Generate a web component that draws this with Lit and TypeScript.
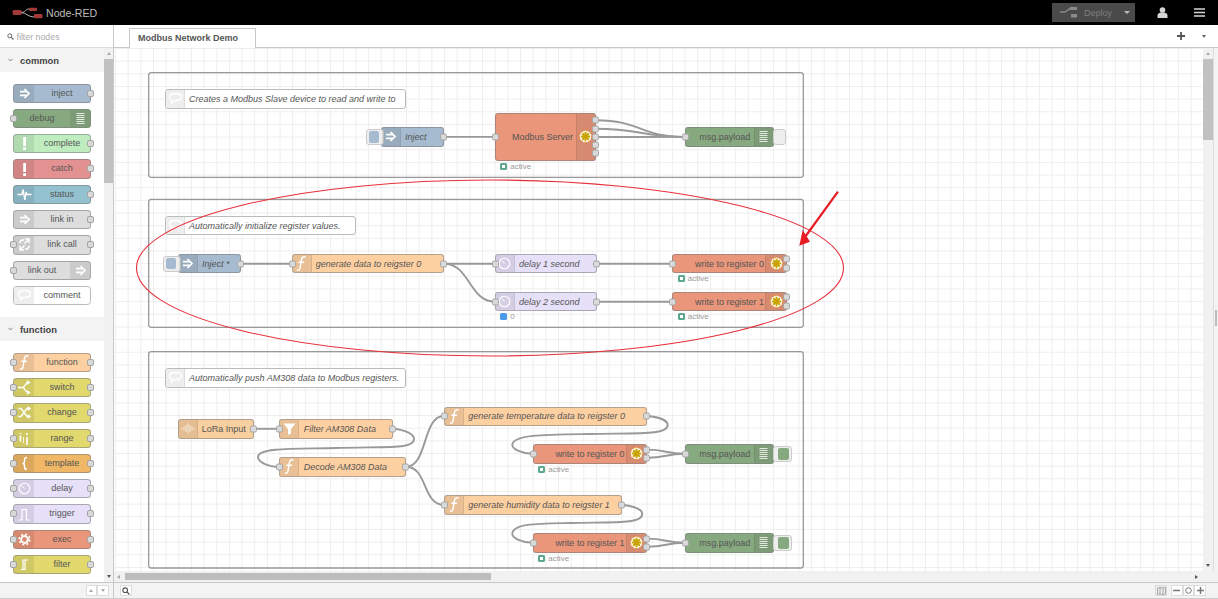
import { LitElement, html, css, svg } from 'lit';
import { customElement } from 'lit/decorators.js';

const ORIGIN_X = 114;
const ORIGIN_Y = 48;

const COLORS: Record<string, string> = {
  inject: '#a6bbcf', debug: '#87a980', complete: '#c0edc0', catch: '#e49191', status: '#94c1d0',
  link: '#dddddd', comment: '#ffffff', fn: '#fdd0a2', switch: '#e2d96e', template: '#efb766',
  delay: '#e6e0f8', exec: '#e9967a', lora: '#f8cf9f',
};

function icon(name: string) {
  switch (name) {
    case 'inject':
    case 'link':
      return svg`<path d="M9.5 5 14 9.5 9.5 14M5 7.6h7.5M5 11.4h7.5" fill="none" stroke="#fff" stroke-width="1.7"/>`;
    case 'linkcall':
      return svg`<path d="M10 4h4v4M14 4 9.5 8.5M9 15H5v-4M5 15l4.5-4.5M4.5 8l2-3H9M14.5 11l-2 3H10" fill="none" stroke="#fff" stroke-width="1.5"/>`;
    case 'debug':
      return svg`<path d="M5.5 4.5h8M5.5 6.5h8M5.5 8.5h8M5.5 10.5h8M5.5 12.5h8M5.5 14.5h8" stroke="#fff" stroke-width=".8"/>`;
    case 'alert':
      return svg`<rect x="8.2" y="3" width="2.8" height="9" fill="#fff"/><rect x="8.2" y="13.2" width="2.8" height="2.8" fill="#fff"/>`;
    case 'status':
      return svg`<path d="M2.5 9.5H7l1.2-5 1.6 10.500 1.400-8 .8 2.500h4.500" fill="none" stroke="#fff" stroke-width="1.400"/>`;
    case 'comment':
      return svg`<path d="M3.5 8C3.500 5.500 6 4.500 9.500 4.500S15.500 5.500 15.500 8 13 11.500 9.500 11.500H8L5.500 14V11C4.300 10.500 3.500 9.500 3.500 8Z" fill="none" stroke="#fff" stroke-width="1.400"/>`;
    case 'fn':
      return svg`<path d="M13.500 3c-2.300-.8-3.700.3-4 2.500L8 14c-.3 2-1.600 2.600-3.200 1.900M6.300 8.300H12" fill="none" stroke="#fff" stroke-width="1.500"/>`;
    case 'switch':
      return svg`<path d="M3 9.500h4.500M13 4.500c-3 0-2.500 5-5.500 5 3 0 2.500 5 5.500 5M12 2.800l2.500 1.700-2.500 1.700M12 12.800l2.500 1.700-2.500 1.700" fill="none" stroke="#fff" stroke-width="1.400"/>`;
    case 'change':
      return svg`<path d="M3.500 5.500H6l6 8h2M3.500 13.500H6l6-8h2M12.800 3.700l2.200 1.800-2.200 1.800M12.800 11.700l2.200 1.800-2.200 1.800" fill="none" stroke="#fff" stroke-width="1.400"/>`;
    case 'range':
      return svg`<path d="M5.500 6.500v6M12 8v8M12 4v2M5.500 4v1" stroke="#fff" stroke-width="1.600" fill="none"/><path d="M8.500 8v6" stroke="#fff" stroke-width=".8"/>`;
    case 'template':
      return svg`<path d="M12 3.500c-2 0-2.500 1-2.500 2.500v1.500c0 1.200-.6 2-2 2 1.400 0 2 .8 2 2V13c0 1.500.5 2.500 2.500 2.500" fill="none" stroke="#fff" stroke-width="1.400"/>`;
    case 'delay':
      return svg`<circle cx="9.500" cy="9.500" r="5.300" fill="none" stroke="#fff" stroke-width="1.100"/><path d="M6.800 6.800 9.500 9.500" stroke="#fff" stroke-width="1"/>`;
    case 'trigger':
      return svg`<path d="M3.500 15H7V4.500h4.500V15H15" fill="none" stroke="#fff" stroke-width="1.200"/>`;
    case 'exec':
      return svg`<circle cx="9.500" cy="9.500" r="3.400" fill="none" stroke="#fff" stroke-width="2"/><circle cx="9.500" cy="9.500" r="5.300" fill="none" stroke="#fff" stroke-width="1.600" stroke-dasharray="2 2.160"/>`;
    case 'filter':
      return svg`<path d="M6 14.500h2V5h5M10 5v9.500H8" fill="none" stroke="#fff" stroke-width="1.200"/>`;
    case 'funnel':
      return svg`<path d="M3.500 4.500h12L11 10v4.500l-3 1.300V10Z" fill="#fff"/>`;
    case 'lora':
      return svg`<path d="M4 8.500v2M6 7.500v4M8 6v7M10 4.500v10M12 6v7M14 7.500v4M16 8.500v2" stroke="#fff" stroke-width=".9" opacity=".75"/>`;
    case 'modbus':
      return svg`<circle cx="9.500" cy="9.500" r="6" fill="#fff" stroke="#e8932a" stroke-width="1" stroke-dasharray="2.500 1.500"/><path d="M9.500 4.800v9.400M4.800 9.500h9.400M6.200 6.200l6.600 6.600M12.800 6.200l-6.600 6.600" stroke="#c9a400" stroke-width="2"/>`;
    default:
      return svg``;
  }
}

interface PaletteNode { label: string; color: string; icon: string; inp?: boolean; out?: boolean; right?: boolean; }

const COMMON: PaletteNode[] = [
  { label: 'inject', color: COLORS.inject, icon: 'inject', out: true },
  { label: 'debug', color: COLORS.debug, icon: 'debug', inp: true, right: true },
  { label: 'complete', color: COLORS.complete, icon: 'alert', out: true },
  { label: 'catch', color: COLORS.catch, icon: 'alert', out: true },
  { label: 'status', color: COLORS.status, icon: 'status', out: true },
  { label: 'link in', color: COLORS.link, icon: 'link', out: true },
  { label: 'link call', color: COLORS.link, icon: 'linkcall', inp: true, out: true },
  { label: 'link out', color: COLORS.link, icon: 'link', inp: true, right: true },
  { label: 'comment', color: COLORS.comment, icon: 'comment' },
];

const FUNCTION: PaletteNode[] = [
  { label: 'function', color: COLORS.fn, icon: 'fn', inp: true, out: true },
  { label: 'switch', color: COLORS.switch, icon: 'switch', inp: true, out: true },
  { label: 'change', color: COLORS.switch, icon: 'change', inp: true, out: true },
  { label: 'range', color: COLORS.switch, icon: 'range', inp: true, out: true },
  { label: 'template', color: COLORS.template, icon: 'template', inp: true, out: true },
  { label: 'delay', color: COLORS.delay, icon: 'delay', inp: true, out: true },
  { label: 'trigger', color: COLORS.delay, icon: 'trigger', inp: true, out: true },
  { label: 'exec', color: COLORS.exec, icon: 'exec', inp: true, out: true },
  { label: 'filter', color: COLORS.switch, icon: 'filter', inp: true, out: true },
];

interface FlowNode {
  x: number; y: number; w: number; h?: number; label: string; color: string; icon: string;
  tx: number; italic?: boolean; inp?: boolean; outs?: number[]; right?: number;
  btn?: { x: number; w: number; ix: number; iw: number; fill: string };
  status?: { text: string; kind: string };
}

const GROUPS = [
  { x: 148.7, y: 72.7, w: 654.6, h: 104.6 },
  { x: 148.7, y: 199.3, w: 654.6, h: 128 },
  { x: 148.7, y: 351.7, w: 654.6, h: 216.3 },
];

const COMMENTS = [
  { x: 165, y: 89.3, w: 241, label: 'Creates a Modbus Slave device to read and write to' },
  { x: 165, y: 216, w: 190.5, label: 'Automatically initialize register values.' },
  { x: 165, y: 368.3, w: 241, label: 'Automatically push AM308 data to Modbus registers.' },
];

const writeNode = (x: number, y: number, w: number, label: string): FlowNode => ({
  x, y, w, label, color: COLORS.exec, icon: 'modbus', tx: x + 22.7, right: 19.3, inp: true,
  outs: [y + 5.3, y + 13.5], status: { text: 'active', kind: 'ok' },
});

const payload = (y: number, on: boolean): FlowNode => ({
  x: 685, y, w: 89, label: 'msg.payload', color: COLORS.debug, icon: 'debug', tx: 699.3, right: 18.3, inp: true,
  btn: on
    ? { x: 772, w: 18.7, ix: 776.7, iw: 11.3, fill: COLORS.debug }
    : { x: 772, w: 13.3, ix: 775.5, iw: 7.5, fill: '#eeeeee' },
});

const NODES: FlowNode[] = [
  { x: 380.7, y: 127.3, w: 63.6, label: 'Inject', color: COLORS.inject, icon: 'inject', tx: 405, italic: true, outs: [136.9],
    btn: { x: 364.7, w: 18, ix: 367.7, iw: 10.8, fill: COLORS.inject } },
  { x: 494.7, y: 113.3, w: 101.3, h: 47.4, label: 'Modbus Server', color: COLORS.exec, icon: 'modbus', tx: 512, right: 18.3, inp: true,
    outs: [120.3, 128.7, 137, 145.3, 153.3], status: { text: 'active', kind: 'ok' } },
  payload(127.3, false),

  { x: 177.7, y: 254, w: 63.3, label: 'Inject *', color: COLORS.inject, icon: 'inject', tx: 202, italic: true, outs: [263.7],
    btn: { x: 161.7, w: 18, ix: 165, iw: 10.5, fill: COLORS.inject } },
  { x: 291.7, y: 254, w: 152.6, label: 'generate data to reigster 0', color: COLORS.fn, icon: 'fn', tx: 315.7, italic: true, inp: true, outs: [263.7] },
  { x: 494.7, y: 254, w: 102, label: 'delay 1 second', color: COLORS.delay, icon: 'delay', tx: 519, italic: true, inp: true, outs: [263.7] },
  { x: 494.7, y: 292, w: 102, label: 'delay 2 second', color: COLORS.delay, icon: 'delay', tx: 519, italic: true, inp: true, outs: [301.7], status: { text: '0', kind: 'blue' } },
  writeNode(672.3, 254, 114.4, 'write to register 0'),
  writeNode(672.3, 292, 114.4, 'write to register 1'),

  { x: 177.7, y: 419.3, w: 76.3, label: 'LoRa Input', color: COLORS.lora, icon: 'lora', tx: 201.7, outs: [428.8] },
  { x: 279.3, y: 419.3, w: 114, label: 'Filter AM308 Data', color: COLORS.fn, icon: 'funnel', tx: 303.7, italic: true, inp: true, outs: [428.8] },
  { x: 279.3, y: 457.3, w: 126.7, label: 'Decode AM308 Data', color: COLORS.fn, icon: 'fn', tx: 303.7, italic: true, inp: true, outs: [466.8] },
  { x: 444, y: 406.5, w: 203.3, label: 'generate temperature data to reigster 0', color: COLORS.fn, icon: 'fn', tx: 468.3, italic: true, inp: true, outs: [416] },
  { x: 444, y: 495.3, w: 178, label: 'generate humidity data to reigster 1', color: COLORS.fn, icon: 'fn', tx: 468.3, italic: true, inp: true, outs: [504.8] },
  writeNode(532.7, 444.3, 114.6, 'write to register 0'),
  payload(444.3, true),
  writeNode(532.7, 533.3, 114.6, 'write to register 1'),
  payload(533.3, true),
];

function curve(x1: number, y1: number, x2: number, y2: number) {
  const c = (x2 - x1) * 0.5;
  return `M${x1} ${y1}C${x1 + c} ${y1} ${x2 - c} ${y2} ${x2} ${y2}`;
}

const WIRES = [
  curve(444.3, 136.9, 494.7, 136.9),
  curve(596, 120.3, 685, 136.9),
  curve(596, 128.7, 685, 136.9),
  curve(596, 137, 685, 136.9),
  curve(241, 263.7, 291.7, 263.7),
  curve(444.3, 263.7, 494.7, 263.7),
  curve(444.3, 263.7, 494.7, 301.7),
  curve(596.7, 263.7, 672.3, 263.7),
  curve(596.7, 301.7, 672.3, 301.7),
  curve(254, 428.8, 279.3, 428.8),
  'M393.3 428.8C405 430 414 434 414 439C414 449 392 446.5 336 448C300 449 258 447 258 457C258 462 268 466.8 279.3 466.8',
  'M406 466.8C428 466.8 422 416 444 416',
  'M406 466.8C428 466.8 422 504.8 444 504.8',
  'M647.3 416C658 417 667.7 420 667.7 425C667.7 435 640 433 590 434C550 434.5 512.3 434 512.3 445C512.3 449 522 453.8 532.7 453.8',
  'M622 504.8C632 506 642.3 509 642.3 514C642.3 524 615 522 570 523C540 523.5 512.3 523 512.3 534C512.3 538 522 542.8 532.7 542.8',
  curve(647.3, 449.6, 685, 453.8),
  curve(647.3, 457.8, 685, 453.8),
  curve(647.3, 538.6, 685, 542.8),
  curve(647.3, 546.8, 685, 542.8),
];

@customElement('app-root')
export class AppRoot extends LitElement {
  static styles = css`
    :host {
      display: flex;
      flex-direction: column;
      height: 100vh;
      overflow: hidden;
      font-family: "Liberation Sans", Arial, sans-serif;
      color: #555;
      background: #fff;
    }

    .header {
      flex: 0 0 25px;
      display: flex;
      align-items: center;
      background: #000;
      padding: 0 13px 0 12px;
    }
    .logo { width: 31px; height: 12px; margin-right: 3px; }
    .brand { color: #bdbdbd; font-size: 10.6px; }
    .deploy {
      margin-left: auto;
      width: 83px;
      height: 19px;
      background: #4a4a4a;
      display: flex;
      align-items: center;
      color: #7d7d7d;
      font-size: 9px;
      padding-left: 8px;
      box-sizing: border-box;
    }
    .deploy svg { margin-right: 7px; }
    .deploy .caret { margin-left: 12px; }
    .user { margin-left: 22px; margin-right: 26px; }

    .main { flex: 1; display: flex; min-height: 0; }

    .sidebar {
      flex: 0 0 113px;
      display: flex;
      flex-direction: column;
      border-right: 1px solid #c8c8c8;
    }
    .filter {
      flex: 0 0 23px;
      display: flex;
      align-items: center;
      gap: 2.5px;
      padding: 1px 0 0 7px;
      font-size: 8.8px;
      color: #aaa;
      border-bottom: 1px solid #ddd;
      box-sizing: border-box;
    }
    .palette-wrap { flex: 1; display: flex; min-height: 0; }
    .palette { flex: 1; overflow: hidden; }
    .cat {
      height: 24px;
      display: flex;
      align-items: center;
      background: #f3f3f3;
      font-size: 9.4px;
      font-weight: bold;
      color: #444;
      padding-left: 8px;
      gap: 7px;
    }
    .items {
      display: flex;
      flex-direction: column;
      gap: 6px;
      padding: 11.5px 0 12px 13px;
    }

    .pnode {
      position: relative;
      height: 19.3px;
      width: 78px;
      box-sizing: border-box;
      border: 1px solid rgba(120, 120, 120, .55);
      border-radius: 3.5px;
      display: flex;
      font-size: 9px;
    }
    .pnode.white { border-color: #bbb; }
    .pnode .lbl { flex: 1; text-align: center; line-height: 17px; white-space: nowrap; }
    .pnode .ic { flex: 0 0 20px; }
    .ic {
      background: rgba(0, 0, 0, .08);
      display: flex;
      align-items: center;
      justify-content: center;
      overflow: hidden;
      min-height: 0;
    }
    .ic svg { flex: none; width: 19px; height: 19px; margin: -2px 0; }
    .white .ic { background: #eee; }
    .pnode .ic.l { border-radius: 2.5px 0 0 2.5px; }
    .ic.r { border-radius: 0 2.5px 2.5px 0; }
    .port {
      position: absolute;
      width: 7px;
      height: 7px;
      box-sizing: border-box;
      background: #d9d9d9;
      border: 1px solid #a5a5a5;
      border-radius: 2px;
    }
    .pnode .port { top: 5px; }
    .pnode .port.in { left: -4px; }
    .pnode .port.out { right: -4px; }

    .vbar {
      flex: 0 0 9px;
      background: #f1f1f1;
      display: flex;
      flex-direction: column;
    }
    .vbar .arrow { flex: 0 0 11px; display: flex; align-items: center; justify-content: center; }
    .vbar .thumb { background: #c1c1c1; }
    .vbar .fill { flex: 1; }
    .up { width: 0; height: 0; border: 2.5px solid transparent; border-top: 0; border-bottom: 3px solid #555; }
    .up.dim { border-bottom-color: #aaa; }
    .down { width: 0; height: 0; border: 2.5px solid transparent; border-bottom: 0; border-top: 3px solid #555; }

    .workspace { flex: 1; display: flex; flex-direction: column; min-width: 0; }
    .tabs {
      flex: 0 0 23px;
      display: flex;
      align-items: flex-end;
      box-sizing: border-box;
      border-bottom: 1px solid #c8c8c8;
      padding-left: 15px;
    }
    .tab {
      width: 127px;
      height: 20px;
      box-sizing: border-box;
      border: 1px solid #c8c8c8;
      border-bottom: 0;
      margin-bottom: -1px;
      background: #fff;
      font-size: 9px;
      font-weight: bold;
      color: #555;
      padding-left: 8px;
      line-height: 18px;
    }
    .tab-tools { margin-left: auto; margin-right: 12px; align-self: center; display: flex; align-items: center; gap: 17px; }

    .view { flex: 1; display: flex; min-height: 0; }
    .canvas {
      flex: 1;
      position: relative;
      overflow: hidden;
      background-color: #fff;
      background-image:
        linear-gradient(to right, #eee 1px, transparent 1px),
        linear-gradient(to bottom, #eee 1px, transparent 1px);
      background-size: 12.67px 12.67px;
      background-position: 1px 0;
    }
    .wires, .marks { position: absolute; left: 0; top: 0; width: 1089px; height: 523px; }
    .marks { z-index: 5; pointer-events: none; }
    .wbar { flex: 0 0 10px; }
    .wbar .thumb { flex: 0 0 81px; }
    .sep { flex: 0 0 5px; background: #f3f3f3; display: flex; align-items: center; justify-content: center; border-left: 1px solid #ddd; box-sizing: border-box; }
    .sep i { display: block; width: 2px; height: 16px; background: #bbb; margin-top: 16px; }

    .hbar {
      flex: 0 0 11px;
      background: #f1f1f1;
      display: flex;
      align-items: center;
      padding: 0 20px 0 3px;
      gap: 3px;
    }
    .hbar .thumb { width: 366px; height: 7px; background: #bdbdbd; margin-left: 2px; }
    .hbar .end { margin-left: auto; }
    .left { width: 0; height: 0; border: 2.5px solid transparent; border-left: 0; border-right: 3px solid #aaa; }
    .right { width: 0; height: 0; border: 2.5px solid transparent; border-right: 0; border-left: 3px solid #555; }

    .cnode {
      position: absolute;
      box-sizing: border-box;
      border: 1px solid rgba(120, 120, 120, .55);
      border-radius: 3px;
      display: flex;
      font-size: 9px;
      z-index: 2;
    }
    .cnode.white { background: #fff; border-color: #bbb; }
    .cnode .ic { flex: 0 0 18px; border-right: 1px solid rgba(0, 0, 0, .07); }
    .cnode .ic.r { margin-left: auto; border-right: 0; border-left: 1px solid rgba(0, 0, 0, .07); }
    .cnode .ic.l { border-radius: 2px 0 0 2px; }
    .cnode .lbl {
      position: absolute;
      top: 0;
      bottom: 0;
      display: flex;
      align-items: center;
      white-space: nowrap;
      color: #555;
    }
    .cnode .lbl.it { font-style: italic; }
    .cnode .port { transform: translateY(-50%); }
    .cnode .port.in { left: -4px; }
    .cnode .port.out { right: -4px; }
    .btn {
      position: absolute;
      top: 0.5px;
      bottom: 0.5px;
      box-sizing: border-box;
      background: #eee;
      border: 1px solid #ccc;
      border-radius: 3px;
      z-index: -1;
    }
    .btn i {
      position: absolute;
      top: 1.5px;
      bottom: 1.5px;
      border-radius: 2px;
      display: block;
    }
    .status {
      position: absolute;
      left: 4.5px;
      top: 100%;
      margin-top: 3px;
      display: flex;
      align-items: center;
      gap: 3px;
      font-size: 8px;
      color: #999;
      line-height: 7px;
    }
    .dot { width: 7px; height: 7px; box-sizing: border-box; border-radius: 1.5px; }
    .dot.ok { border: 2px solid #5ba88c; background: #fff; }
    .dot.blue { background: #4a9ae8; }

    .footer {
      flex: 0 0 17px;
      display: flex;
      align-items: center;
      box-sizing: border-box;
      background: #f3f3f3;
      border-top: 1px solid #c8c8c8;
      border-bottom: 1px solid #ccc;
    }
    .foot-left {
      flex: 0 0 114px;
      height: 100%;
      display: flex;
      align-items: center;
      justify-content: flex-end;
      padding-right: 4px;
      box-sizing: border-box;
      border-right: 1px solid #c8c8c8;
    }
    .fbtn {
      width: 11.7px;
      height: 11.7px;
      box-sizing: border-box;
      background: #fff;
      border: 1px solid #ddd;
      display: flex;
      align-items: center;
      justify-content: center;
    }
    .foot-search { margin-left: 6px; }
    .foot-right { margin-left: auto; margin-right: 12px; display: flex; align-items: center; }
    .foot-right .map { margin-right: 4px; background: #eee; }
  `;

  private palette(n: PaletteNode) {
    const white = n.color === '#ffffff';
    const ic = html`<div class="ic ${n.right ? 'r' : 'l'}"><svg viewBox="0 0 19 19">${icon(n.icon)}</svg></div>`;
    return html`
      <div class="pnode ${white ? 'white' : ''}" style="background:${n.color}">
        ${n.right ? '' : ic}
        <div class="lbl">${n.label}</div>
        ${n.right ? ic : ''}
        ${n.inp ? html`<span class="port in"></span>` : ''}
        ${n.out ? html`<span class="port out"></span>` : ''}
      </div>`;
  }

  private flowNode(n: FlowNode) {
    const h = n.h ?? 19.3;
    const ic = html`<div class="ic ${n.right ? 'r' : 'l'}" style=${n.right ? `flex-basis:${n.right}px` : ''}><svg viewBox="0 0 19 19">${icon(n.icon)}</svg></div>`;
    return html`
      <div class="cnode" style="left:${n.x - ORIGIN_X}px;top:${n.y - ORIGIN_Y}px;width:${n.w}px;height:${h}px;background:${n.color}">
        ${n.btn ? html`<div class="btn" style="left:${n.btn.x - n.x}px;width:${n.btn.w}px">
          <i style="left:${n.btn.ix - n.btn.x - 1}px;width:${n.btn.iw}px;background:${n.btn.fill}"></i></div>` : ''}
        ${ic}
        <div class="lbl ${n.italic ? 'it' : ''}" style="left:${n.tx - n.x - 1}px">${n.label}</div>
        ${n.inp ? html`<span class="port in" style="top:${h / 2 - 1}px"></span>` : ''}
        ${(n.outs ?? []).map((y) => html`<span class="port out" style="top:${y - n.y - 1}px"></span>`)}
        ${n.status ? html`<div class="status"><span class="dot ${n.status.kind}"></span>${n.status.text}</div>` : ''}
      </div>`;
  }

  render() {
    return html`
      <div class="header">
        <svg class="logo" viewBox="0 0 31 12">
          <path d="M9 5.5C14 5.500 13 2 17 2M9 5.500C14 5.500 16 10 22 10" fill="none" stroke="#ddd" stroke-width=".8"/>
          <rect x=".7" y="3" width="9" height="5" rx="1.3" fill="#a33a3a"/>
          <rect x="17" y=".7" width="8" height="3.4" rx="1" fill="#a33a3a"/>
          <rect x="22" y="7" width="8.5" height="4.2" rx="1" fill="#a33a3a"/>
        </svg>
        <span class="brand">Node-RED</span>
        <div class="deploy">
          <svg width="17" height="11" viewBox="0 0 17 11">
            <path d="M0 5h5l5-3.500h2" fill="none" stroke="#8a8a8a" stroke-width="1.5"/>
            <rect x="10" y="0" width="7" height="3" fill="#8a8a8a"/>
            <rect x="11" y="7" width="6" height="3.5" fill="#8a8a8a"/>
          </svg>
          Deploy
          <span class="down caret" style="border-top-color:#bbb;border-width:3px 3px 0"></span>
        </div>
        <svg class="user" width="11" height="11" viewBox="0 0 11 11">
          <circle cx="5.5" cy="3" r="2.8" fill="#d5d5d5"/>
          <path d="M.5 11V8.500C.5 6.500 2 6 3.500 5.500h4c1.500.5 3 1 3 3V11Z" fill="#d5d5d5"/>
        </svg>
        <svg width="11" height="9" viewBox="0 0 11 9"><path d="M0 1h11M0 4.500h11M0 8h11" stroke="#d5d5d5" stroke-width="1.5"/></svg>
      </div>

      <div class="main">
        <div class="sidebar">
          <div class="filter">
            <svg width="7" height="7" viewBox="0 0 7 7"><circle cx="2.8" cy="2.8" r="2" fill="none" stroke="#666" stroke-width="1"/><path d="M4.300 4.300 6.500 6.500" stroke="#666" stroke-width="1.2"/></svg>
            filter nodes
          </div>
          <div class="palette-wrap">
            <div class="palette">
              <div class="cat">${this.chevron()}common</div>
              <div class="items">${COMMON.map((n) => this.palette(n))}</div>
              <div class="cat">${this.chevron()}function</div>
              <div class="items">${FUNCTION.map((n) => this.palette(n))}</div>
            </div>
            <div class="vbar">
              <div class="arrow"><span class="up dim"></span></div>
              <div class="thumb" style="flex:0 0 124px"></div>
              <div class="fill"></div>
              <div class="arrow"><span class="down"></span></div>
            </div>
          </div>
        </div>

        <div class="workspace">
          <div class="tabs">
            <div class="tab">Modbus Network Demo</div>
            <div class="tab-tools">
              <svg width="8" height="8" viewBox="0 0 8 8"><path d="M4 0v8M0 4h8" stroke="#555" stroke-width="1.8"/></svg>
              <span class="down" style="border-top-color:#666"></span>
            </div>
          </div>
          <div class="view">
            <div class="canvas">
              <svg class="wires" viewBox="${ORIGIN_X} ${ORIGIN_Y} 1089 523">
                ${GROUPS.map((g) => svg`<rect x=${g.x} y=${g.y} width=${g.w} height=${g.h} rx="2.5" fill="none" stroke="#999" stroke-width="1.3"/>`)}
                ${WIRES.map((d) => svg`<path d=${d} fill="none" stroke="#999" stroke-width="1.9"/>`)}
              </svg>
              ${COMMENTS.map((c) => html`
                <div class="cnode white" style="left:${c.x - ORIGIN_X}px;top:${c.y - ORIGIN_Y}px;width:${c.w}px;height:19.3px">
                  <div class="ic l"><svg viewBox="0 0 19 19">${icon('comment')}</svg></div>
                  <div class="lbl it" style="left:23px">${c.label}</div>
                </div>`)}
              ${NODES.map((n) => this.flowNode(n))}
              <svg class="marks" viewBox="${ORIGIN_X} ${ORIGIN_Y} 1089 523">
                <ellipse cx="490" cy="268" rx="353.5" ry="88" fill="none" stroke="#e8303a" stroke-width="1.1"/>
                <path d="M838 191.700 805 237" stroke="#e81c24" stroke-width="2.2" fill="none"/>
                <path d="M799.300 245.700 802.700 230 810 241.700Z" fill="#e81c24"/>
              </svg>
            </div>
            <div class="vbar wbar">
              <div class="arrow"><span class="up dim"></span></div>
              <div class="thumb"></div>
              <div class="fill"></div>
              <div class="arrow"><span class="down"></span></div>
            </div>
            <div class="sep"><i></i></div>
          </div>
          <div class="hbar">
            <span class="left"></span>
            <div class="thumb"></div>
            <span class="right end"></span>
          </div>
        </div>
      </div>

      <div class="footer">
        <div class="foot-left">
          <div class="fbtn"><span class="up" style="border-bottom-color:#aaa"></span></div>
          <div class="fbtn"><span class="down" style="border-top-color:#aaa"></span></div>
        </div>
        <div class="fbtn foot-search">
          <svg width="8" height="8" viewBox="0 0 8 8"><circle cx="3.2" cy="3.2" r="2.3" fill="none" stroke="#555" stroke-width="1.1"/><path d="M5 5 7.500 7.500" stroke="#555" stroke-width="1.3"/></svg>
        </div>
        <div class="foot-right">
          <div class="fbtn map">
            <svg width="9" height="8" viewBox="0 0 9 8"><path d="M.5 1 3 .5 6 1l2.500-.5v6.500L6 7.500 3 7l-2.500.5ZM3 .5V7M6 1v6.500" fill="none" stroke="#999" stroke-width=".8"/></svg>
          </div>
          <div class="fbtn"><svg width="7" height="7" viewBox="0 0 7 7"><path d="M0 3.500h7" stroke="#777" stroke-width="1.5"/></svg></div>
          <div class="fbtn"><svg width="7" height="7" viewBox="0 0 7 7"><circle cx="3.5" cy="3.5" r="2.8" fill="none" stroke="#777" stroke-width="1"/></svg></div>
          <div class="fbtn"><svg width="7" height="7" viewBox="0 0 7 7"><path d="M0 3.500h7M3.500 0v7" stroke="#777" stroke-width="1.5"/></svg></div>
        </div>
      </div>
    `;
  }

  private chevron() {
    return html`<svg width="5" height="4" viewBox="0 0 5 4"><path d="M.5 .8 2.500 3 4.500 .8" fill="none" stroke="#888" stroke-width="1"/></svg>`;
  }
}
